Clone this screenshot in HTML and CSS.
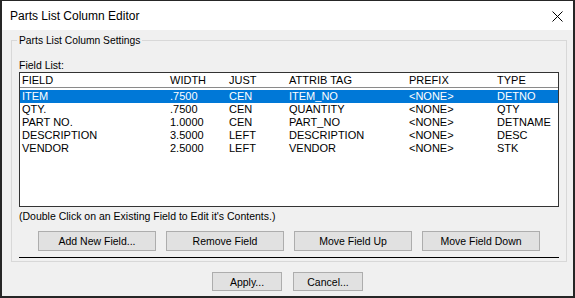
FILE: index.html
```html
<!DOCTYPE html>
<html lang="en">
<head>
    <meta charset="UTF-8">
    <meta name="viewport" content="width=device-width, initial-scale=1.0">
    <title>Parts List Column Editor</title>
    <link rel="stylesheet" href="styles.css">
</head>
<body>
    <div class="dialog">
        <div class="titlebar">
            <span class="title">Parts List Column Editor</span>
            <svg class="close" width="11" height="11" viewBox="0 0 11 11">
                <path d="M0.5 0.5 L10.5 10.5 M10.5 0.5 L0.5 10.5" stroke="#000" stroke-width="1" fill="none"/>
            </svg>
        </div>
        <div class="content">
            <fieldset class="group">
                <legend>Parts List Column Settings</legend>
                <div class="field-label">Field List:</div>
                <div class="listview">
                    <div class="row header">
                        <span>FIELD</span><span>WIDTH</span><span>JUST</span><span>ATTRIB TAG</span><span>PREFIX</span><span>TYPE</span>
                    </div>
                    <ul class="rows">
                        <li class="row selected">
                            <span>ITEM</span><span>.7500</span><span>CEN</span><span>ITEM_NO</span><span>&lt;NONE&gt;</span><span>DETNO</span>
                        </li>
                        <li class="row">
                            <span>QTY.</span><span>.7500</span><span>CEN</span><span>QUANTITY</span><span>&lt;NONE&gt;</span><span>QTY</span>
                        </li>
                        <li class="row">
                            <span>PART NO.</span><span>1.0000</span><span>CEN</span><span>PART_NO</span><span>&lt;NONE&gt;</span><span>DETNAME</span>
                        </li>
                        <li class="row">
                            <span>DESCRIPTION</span><span>3.5000</span><span>LEFT</span><span>DESCRIPTION</span><span>&lt;NONE&gt;</span><span>DESC</span>
                        </li>
                        <li class="row">
                            <span>VENDOR</span><span>2.5000</span><span>LEFT</span><span>VENDOR</span><span>&lt;NONE&gt;</span><span>STK</span>
                        </li>
                    </ul>
                </div>
                <p class="hint">(Double Click on an Existing Field to Edit it's Contents.)</p>
                <div class="field-buttons">
                    <button class="btn">Add New Field...</button>
                    <button class="btn">Remove Field</button>
                    <button class="btn">Move Field Up</button>
                    <button class="btn">Move Field Down</button>
                </div>
                <div class="separator"></div>
            </fieldset>
            <div class="dialog-buttons">
                <button class="btn small">Apply...</button>
                <button class="btn small">Cancel...</button>
            </div>
        </div>
    </div>
</body>
</html>
```

FILE: styles.css
```css
:root{
    --face : #f0f0f0;
    --frame : #262626;
    --select : #0078d7;
    --btn : #e1e1e1;
    --btn-border : #adadad;
}

*{
    padding: 0;
    margin: 0;
    box-sizing: border-box;
}

ul{
    list-style: none;
}

body{
    background: var(--frame);
    font-family: "Liberation Sans", Arial, sans-serif;
    font-size: 11px;
    color: #000;
}

.dialog{
    width: 575px;
    height: 298px;
    border: 2px solid var(--frame);
    border-top-width: 1px;
    background: var(--face);
    display: flex;
    flex-direction: column;
}

.titlebar{
    height: 29px;
    background: #fff;
    display: flex;
    align-items: center;
    justify-content: space-between;
    padding: 0 10px 0 8px;
}

.title{
    font-size: 12px;
    padding-top: 1px;
}

.close{
    display: block;
    margin-top: 1px;
}

.content{
    flex: 1;
}

.group{
    margin: 4px 6px 0 9px;
    border: 1px solid #d8d8d8;
    padding: 0 7px 3px 7px;
}

.group legend{
    margin-left: -2px;
    padding: 0 2px;
    font-size: 10.3px;
    line-height: 13px;
}

.field-label{
    margin-top: 12px;
    line-height: 13px;
    font-size: 10.5px;
}

.listview{
    height: 135px;
    background: #fff;
    border: 1px solid #333;
}

.row{
    display: grid;
    grid-template-columns: 148px 59px 60px 120px 88px 1fr;
    padding-left: 2px;
    height: 13px;
    line-height: 13px;
    white-space: nowrap;
}

.header{
    height: 15px;
    line-height: 14px;
    border-bottom: 1px solid #8a8a8a;
}

.rows{
    padding-top: 2px;
}

.selected{
    background: var(--select);
    color: #fff;
}

.hint{
    margin-top: 3px;
    line-height: 13px;
    font-size: 10.5px;
}

.field-buttons{
    display: flex;
    justify-content: center;
    gap: 10px;
    margin-top: 8px;
}

.btn{
    width: 118px;
    height: 20px;
    background: var(--btn);
    border: 1px solid var(--btn-border);
    font-family: inherit;
    font-size: 10.5px;
    color: #000;
}

.btn.small{
    width: 70px;
    height: 19px;
}

.separator{
    margin-top: 6px;
    border-top: 1px solid #000;
}

.dialog-buttons{
    display: flex;
    justify-content: center;
    gap: 11px;
    margin-top: 10px;
}
```
